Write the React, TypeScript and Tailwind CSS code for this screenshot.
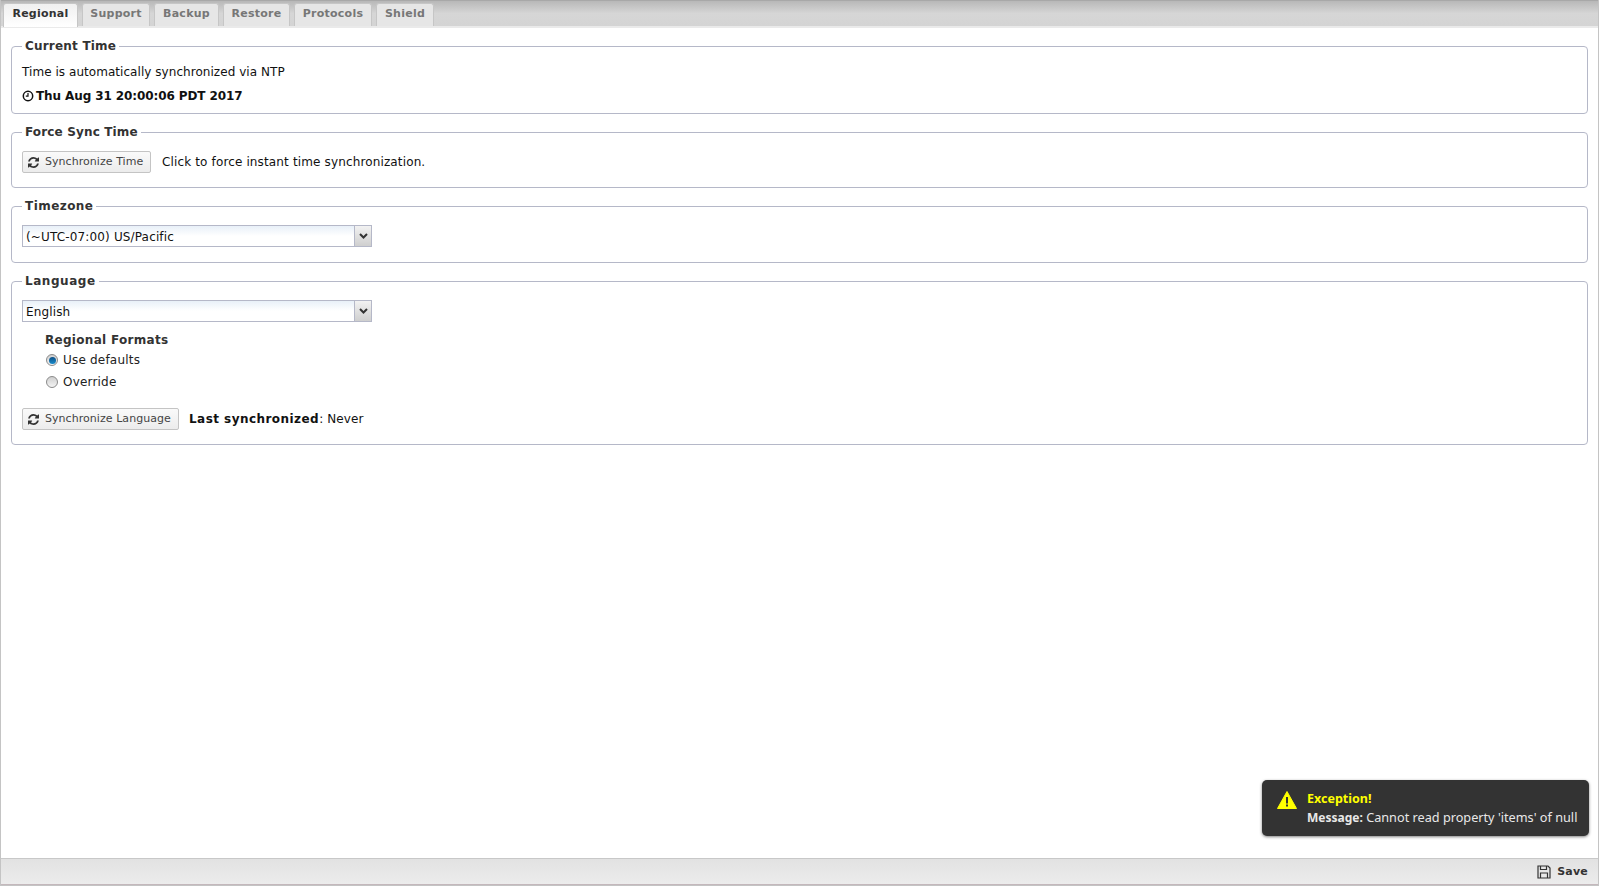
import React from "react";

const tabs = [
  { name: "Regional", w: "w-[75px]" },
  { name: "Support", w: "w-[68px]" },
  { name: "Backup", w: "w-[65px]" },
  { name: "Restore", w: "w-[67px]" },
  { name: "Protocols", w: "w-[78px]" },
  { name: "Shield", w: "w-[58px]" },
];

function SyncIcon() {
  return (
    <svg width="11" height="11" viewBox="0 0 1536 1536" className="shrink-0" fill="#333">
      <path d="M1511 928q0 5-1 7-64 268-268 434.5T764 1536q-146 0-282.500-55T238 1324l-129 129q-19 19-45 19t-45-19-19-45V960q0-26 19-45t45-19h448q26 0 45 19t19 45-19 45l-137 137q71 66 161 102t187 36q134 0 250-65t186-179q11-17 53-117 8-23 30-23h192q13 0 22.500 9.500t9.500 22.500zm25-800v448q0 26-19 45t-45 19h-448q-26 0-45-19t-19-45 19-45l138-138Q969 256 768 256q-134 0-250 65T332 500q-11 17-53 117-8 23-30 23H50q-13 0-22.500-9.500T18 608v-7q65-268 270-434.500T768 0q146 0 284 55.500T1297 212l130-129q19-19 45-19t45 19 19 45z" />
    </svg>
  );
}

function Fieldset({ title, track, className, children }: { title: string; track: string; className: string; children: React.ReactNode }) {
  return (
    <fieldset className={`mx-[10px] border border-[#b5b8c8] rounded-[4px] pl-[10px] pr-[10px] ${className}`}>
      <legend className={`ml-0 px-[3px] text-[12px] leading-[16px] font-bold text-[#333] ${track}`}>{title}</legend>
      {children}
    </fieldset>
  );
}

function SyncButton({ label, className }: { label: string; className: string }) {
  return (
    <button className={`h-[22px] flex items-center gap-[6px] pl-[5px] border border-[#c4c4c4] rounded-[2px] bg-gradient-to-b from-[#fafafa] to-[#ececec] text-[11px] text-[#444] tracking-[0.05px] ${className}`}>
      <SyncIcon />
      <span>{label}</span>
    </button>
  );
}

function Select({ value }: { value: string }) {
  return (
    <div className="w-[350px] h-[22px] flex border border-[#b5b8c8] bg-gradient-to-b from-[#e8f0f8] via-white to-white">
      <div className="flex-1 pl-[3px] text-[12px] leading-[22px] text-[#111] tracking-[0.15px]">{value}</div>
      <div className="w-[17px] border-l border-[#b5b8c8] bg-gradient-to-b from-[#f2f2f2] to-[#cfcfcf] flex items-center justify-center">
        <svg width="9" height="6" viewBox="0 0 9 6"><path d="M1 1l3.500 3.500L8 1" fill="none" stroke="#333" strokeWidth="2" /></svg>
      </div>
    </div>
  );
}

function Radio({ checked, label, className }: { checked?: boolean; label: string; className: string }) {
  return (
    <div className={`flex items-center text-[12px] leading-[16px] text-[#222] tracking-[0.2px] ${className}`}>
      <span className="w-[12px] h-[12px] rounded-full border border-[#8a8a8a] bg-gradient-to-b from-[#cfcfcf] to-[#f4f4f4] flex items-center justify-center mr-[5px] ml-[2px]">
        {checked && <span className="w-[7px] h-[7px] rounded-full bg-gradient-to-b from-[#0b4f86] to-[#1a8ccc]" />}
      </span>
      {label}
    </div>
  );
}

export default function App() {
  return (
    <div className="w-[1599px] h-[886px] flex flex-col bg-white border border-[#c4c4c4] border-t-0 overflow-hidden relative text-[#111]" style={{ fontFamily: '"DejaVu Sans", sans-serif' }}>
      <div className="h-[28px] shrink-0 flex items-start gap-[4px] pl-[2px] pt-[2px] bg-gradient-to-b from-[#b8b8b8] via-[#d6d6d6] to-[#d4d4d4] border-b-[2px] border-b-[#eaeaea] border-t border-t-[#a8a8a8]">
        {tabs.map((t, i) => (
          <div
            key={t.name}
            className={`${t.w} h-[23px] pb-[2px] flex items-center justify-center border border-[#c6c6c6] border-b-0 rounded-t-[3px] text-[11px] font-bold tracking-[0.25px] ${i === 0 ? "bg-gradient-to-b from-[#f0f0f0] to-white text-[#333] h-[24px]" : "bg-[#e6e6e6] text-[#777]"}`}
          >
            {t.name}
          </div>
        ))}
      </div>

      <Fieldset title="Current Time" track="tracking-[0.2px]" className="mt-[10px] h-[76px]">
        <div className="mt-[10px] text-[12px] leading-[16px] text-[#111] tracking-[0.05px]">Time is automatically synchronized via NTP</div>
        <div className="mt-[8px] flex items-center text-[12px] leading-[16px] font-bold text-[#111] tracking-[-0.1px]">
          <svg width="12" height="12" viewBox="0 0 12 12" className="mr-[2px]"><circle cx="6" cy="6" r="4.700" fill="none" stroke="#111" strokeWidth="1.500" /><path d="M6 3v3.200H3.800" fill="none" stroke="#111" strokeWidth="1.200" /></svg>
          Thu Aug 31 20:00:06 PDT 2017
        </div>
      </Fieldset>

      <Fieldset title="Force Sync Time" track="tracking-[0.15px]" className="mt-[10px] h-[64px]">
        <div className="mt-[11px] flex items-center">
          <SyncButton label="Synchronize Time" className="w-[129px]" />
          <span className="ml-[11px] text-[12px] text-[#111] tracking-[0.14px]">Click to force instant time synchronization.</span>
        </div>
      </Fieldset>

      <Fieldset title="Timezone" track="tracking-[0.45px]" className="mt-[10px] h-[65px]">
        <div className="mt-[11px]"><Select value="(~UTC-07:00) US/Pacific" /></div>
      </Fieldset>

      <Fieldset title="Language" track="tracking-[0.55px]" className="mt-[10px] h-[172px]">
        <div className="mt-[11px]"><Select value="English" /></div>
        <div className="ml-[23px] mt-[10px] text-[12px] leading-[16px] font-bold text-[#333] tracking-[0.3px]">Regional Formats</div>
        <Radio checked label="Use defaults" className="ml-[22px] mt-[4px]" />
        <Radio label="Override" className="ml-[22px] mt-[6px]" />
        <div className="mt-[18px] flex items-center">
          <SyncButton label="Synchronize Language" className="w-[157px]" />
          <span className="ml-[10px] text-[12px] text-[#111] tracking-[0.1px]"><b className="tracking-[0.45px]">Last synchronized</b>: Never</span>
        </div>
      </Fieldset>

      <div className="flex-1" />

      <div className="h-[27px] shrink-0 flex items-center justify-end pr-[10px] border-t border-t-[#c8c8c8] border-b border-b-[#c4b8bc] bg-gradient-to-b from-[#e2e2e2] to-[#ececec]">
        <svg width="14" height="14" viewBox="0 0 14 14" fill="none" stroke="#333" strokeWidth="1.200" className="mr-[6px]">
          <path d="M1 1h10l2 2v10H1z" /><path d="M3.500 1v3.500h6V1M3.500 13V8h7v5" />
        </svg>
        <span className="text-[11px] font-bold tracking-[0.2px] text-[#333] pt-[1px]">Save</span>
      </div>

      <div className="absolute left-[1261px] top-[780px] w-[327px] h-[56px] rounded-[5px] bg-[#333] shadow-[0_1px_3px_rgba(0,0,0,0.5)] flex items-center pl-[15px]" style={{ fontFamily: '"Noto Sans", sans-serif' }}>
        <svg width="20" height="18" viewBox="0 0 20 18" className="mr-[10px] mt-[-16px] shrink-0">
          <path d="M10 0.500L19.500 17.500H0.500z" fill="#ffff00" stroke="#ffff00" strokeLinejoin="round" />
          <rect x="9" y="6" width="2" height="6.500" fill="#333" /><rect x="9" y="13.500" width="2" height="2" fill="#333" />
        </svg>
        <div className="text-[12.7px] leading-[18px] text-[#e8e8e8] mt-[1px]">
          <div className="font-bold text-[12.5px] text-[#ffff00]">Exception!</div>
          <div><b className="text-[12px]">Message:</b> Cannot read property 'items' of null</div>
        </div>
      </div>
    </div>
  );
}
